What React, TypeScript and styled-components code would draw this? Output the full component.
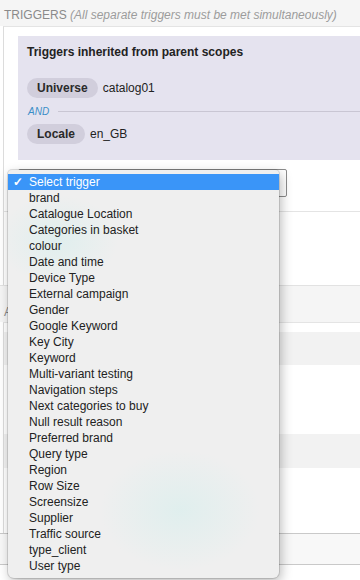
import { FC } from 'react';
import styled, { createGlobalStyle } from 'styled-components';

const triggerOptions = [
    'Select trigger',
    'brand',
    'Catalogue Location',
    'Categories in basket',
    'colour',
    'Date and time',
    'Device Type',
    'External campaign',
    'Gender',
    'Google Keyword',
    'Key City',
    'Keyword',
    'Multi-variant testing',
    'Navigation steps',
    'Next categories to buy',
    'Null result reason',
    'Preferred brand',
    'Query type',
    'Region',
    'Row Size',
    'Screensize',
    'Supplier',
    'Traffic source',
    'type_client',
    'User type',
];

const inherited = [
    { name: 'Universe', value: 'catalog01' },
    { name: 'Locale', value: 'en_GB' },
];

const App: FC = () => {
    return (
        <Page>
            <GlobalStyle />
            <SectionHeader>
                TRIGGERS <HeaderNote>(All separate triggers must be met simultaneously)</HeaderNote>
            </SectionHeader>
            <Panel>
                <TriggerArea>
                    <InheritedBox>
                        <InheritedTitle>Triggers inherited from parent scopes</InheritedTitle>
                        {inherited.map((t, i) => (
                            <div key={t.name}>
                                {i > 0 && (
                                    <AndRow>
                                        <AndLabel>AND</AndLabel>
                                        <AndLine />
                                    </AndRow>
                                )}
                                <TriggerRow>
                                    <Pill>{t.name}</Pill>
                                    <TriggerValue>{t.value}</TriggerValue>
                                </TriggerRow>
                            </div>
                        ))}
                    </InheritedBox>
                    <SelectBox />
                </TriggerArea>
                <EmptySection />
            </Panel>
            <SectionHeader $tall>A</SectionHeader>
            <Panel>
                <Band $shade="#ffffff" $h={9} />
                <Band $shade="#f2f2f2" $h={33} />
                <Band $shade="#ffffff" $h={69} />
                <Band $shade="#f2f2f2" $h={34} />
                <Band $shade="#ffffff" $h={65} />
            </Panel>
            <Footer />

            <Menu>
                {triggerOptions.map((opt, i) => (
                    <MenuItem key={opt} $selected={i === 0}>
                        <Check>{i === 0 ? '✓' : ''}</Check>
                        {opt}
                    </MenuItem>
                ))}
            </Menu>
        </Page>
    );
};

const GlobalStyle = createGlobalStyle`
    html, body {
        margin: 0;
        padding: 0;
        background: #f5f5f5;
        overflow: hidden;
    }
    * {
        box-sizing: border-box;
    }
`;

const Page = styled.div`
    position: relative;
    width: 360px;
    height: 580px;
    overflow: hidden;
    background: #ffffff;
    font-family: 'Liberation Sans', Helvetica, Arial, sans-serif;
    color: #222;
`;

const SectionHeader = styled.div<{ $tall?: boolean }>`
    height: ${({ $tall }) => ($tall ? '37px' : '26px')};
    padding: ${({ $tall }) => ($tall ? '19px 0 0 4px' : '8px 0 0 4px')};
    background: #f5f5f5;
    border-top: ${({ $tall }) => ($tall ? '1px solid #e2e2e2' : 'none')};
    font-size: 12px;
    line-height: 14px;
    color: #8a8a8a;
    white-space: nowrap;
`;

const HeaderNote = styled.span`
    font-style: italic;
    color: #9c9c9c;
`;

const Panel = styled.div`
    margin-left: 3px;
    background: #ffffff;
    border-left: 1px solid #dcdcdc;
    border-top: 1px solid #e4e4e4;
`;

const TriggerArea = styled.div`
    padding: 9px 0 14px 14px;
    border-bottom: 1px solid #e4e4e4;
`;

const InheritedBox = styled.div`
    background: #e5e3ef;
    padding: 9px 0 16px 9px;
`;

const InheritedTitle = styled.div`
    font-size: 12px;
    font-weight: bold;
    line-height: 15px;
    color: #222;
    margin-bottom: 18px;
`;

const TriggerRow = styled.div`
    display: flex;
    align-items: center;
    gap: 5px;
    height: 20px;
`;

const Pill = styled.span`
    display: inline-flex;
    align-items: center;
    height: 20px;
    padding: 0 10px;
    border-radius: 10px;
    background: #d1cedc;
    font-size: 12px;
    font-weight: bold;
    color: #2a2a2a;
`;

const TriggerValue = styled.span`
    font-size: 12px;
    color: #222;
`;

const AndRow = styled.div`
    display: flex;
    align-items: center;
    gap: 9px;
    height: 26px;
    padding-left: 1px;
`;

const AndLabel = styled.span`
    font-size: 10px;
    font-style: italic;
    color: #3a8ec8;
`;

const AndLine = styled.div`
    flex: 1;
    height: 1px;
    background: #c9c6d3;
`;

const SelectBox = styled.div`
    margin-top: 9px;
    width: 269px;
    height: 28px;
    border: 1px solid #8c8c8c;
    border-radius: 2px;
    background: #ffffff;
`;

const EmptySection = styled.div`
    height: 73px;
`;

const Band = styled.div<{ $shade: string; $h: number }>`
    height: ${({ $h }) => $h}px;
    background: ${({ $shade }) => $shade};
`;

const Footer = styled.div`
    height: 32px;
    background: #f8f8f8;
    border-top: 1px solid #c9c9c9;
    border-bottom: 1px solid #c9c9c9;
`;

const Menu = styled.div`
    position: absolute;
    left: 8px;
    top: 170px;
    width: 271px;
    height: 408px;
    padding-top: 4px;
    background:
        radial-gradient(ellipse 60px 45px at 50px 70px, rgba(205, 238, 236, 0.45), rgba(205, 238, 236, 0)),
        radial-gradient(ellipse 80px 60px at 172px 340px, rgba(205, 238, 236, 0.45), rgba(205, 238, 236, 0)),
        #efefef;
    border-radius: 4px 4px 6px 6px;
    box-shadow: 0 0 0 1px rgba(0, 0, 0, 0.12), 2px 4px 12px rgba(0, 0, 0, 0.28);
`;

const MenuItem = styled.div<{ $selected: boolean }>`
    display: flex;
    align-items: center;
    height: 16px;
    font-size: 12px;
    line-height: 16px;
    color: ${({ $selected }) => ($selected ? '#ffffff' : '#222222')};
    background: ${({ $selected }) => ($selected ? '#3a95f8' : 'transparent')};
    white-space: nowrap;
`;

const Check = styled.span`
    display: inline-block;
    width: 21px;
    padding-left: 5px;
    font-size: 12px;
    font-weight: bold;
`;

export default App;
